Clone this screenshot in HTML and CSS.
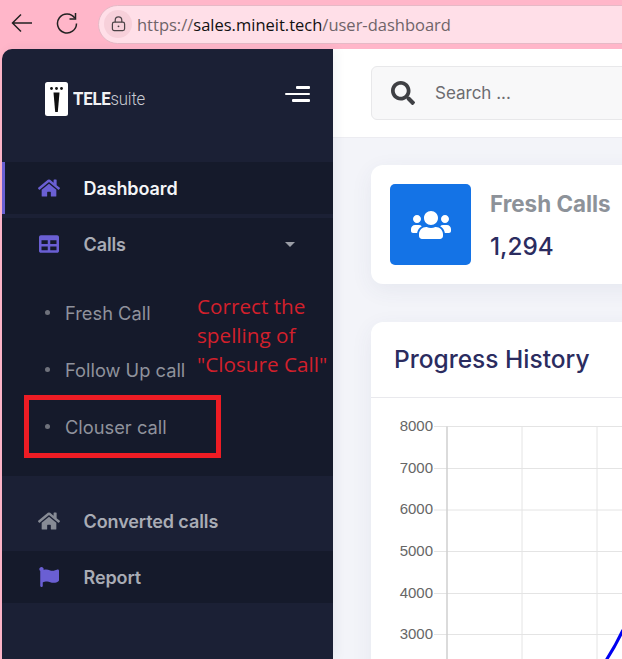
FILE: index.html
```html
<!DOCTYPE html>
<html lang="en">
<head>
  <meta charset="UTF-8" />
  <meta name="viewport" content="width=device-width, initial-scale=1.0"/>
  <title>TELEsuite Dashboard</title>
  <link rel="stylesheet" href="styles.css">
</head>
<body>

  <!-- Browser bar -->
  <div class="browser-bar">
    <svg class="back-icon" viewBox="0 0 22 22"><path d="M21 11H1.500M10 2.500L1.500 11l8.500 8.500"/></svg>
    <svg class="reload-icon" viewBox="0 0 22 22"><path d="M18.800 6A9.500 9.500 0 1 0 20.500 11.500"/><path d="M19.500 1v6h-6"/></svg>
    <div class="address">
      <span class="lock">
        <svg viewBox="0 0 16 16"><rect x="1.500" y="6" width="13" height="9" rx="2"/><path d="M4.500 6V4a3.500 3.500 0 0 1 7 0v2"/><circle class="lock-dot" cx="8" cy="10.500" r="1"/></svg>
      </span>
      <span class="url">https://<b>sales.mineit.tech</b>/user-dashboard</span>
    </div>
  </div>

  <div class="app">
    <aside class="sidebar">
      <div class="brand">
        <div class="brand-logo">
          <svg class="logo-mark" viewBox="0 0 23 34">
            <rect width="23" height="34" rx="2.500" fill="#fff"/>
            <circle cx="6.500" cy="6.500" r="1.400"/><circle cx="11.500" cy="6.500" r="1.400"/><circle cx="16.500" cy="6.500" r="1.400"/>
            <path d="M8.500 10.500h6L12.800 30h-2.600z"/>
          </svg>
          <span class="logo-text"><b>TELE</b>suite</span>
        </div>
        <div class="menu-toggle"><span class="bar-top"></span><span class="bar-mid"></span><span class="bar-bottom"></span></div>
      </div>

      <nav>
        <a class="nav-item active">
          <svg class="nav-icon purple" viewBox="0 0 576 512"><path d="M280.37 148.26L96 300.11V464a16 16 0 0 0 16 16l112.06-.29a16 16 0 0 0 15.92-16V368a16 16 0 0 1 16-16h64a16 16 0 0 1 16 16v95.64a16 16 0 0 0 16 16.05L464 480a16 16 0 0 0 16-16V300L295.67 148.26a12.19 12.19 0 0 0-15.3 0zM571.6 251.47L488 182.56V44.05a12 12 0 0 0-12-12h-56a12 12 0 0 0-12 12v72.61L318.47 43a48 48 0 0 0-61 0L4.34 251.47a12 12 0 0 0-1.6 16.9l25.5 31A12 12 0 0 0 45.15 301l235.22-193.74a12.19 12.19 0 0 1 15.3 0L530.9 301a12 12 0 0 0 16.9-1.6l25.5-31a12 12 0 0 0-1.7-16.93z"/></svg>
          Dashboard
        </a>

        <div class="nav-group">
          <a class="nav-item">
            <svg class="nav-icon purple" viewBox="0 0 512 512"><path d="M464 32H48C21.49 32 0 53.49 0 80v352c0 26.51 21.49 48 48 48h416c26.51 0 48-21.49 48-48V80c0-26.51-21.49-48-48-48zM224 416H64v-96h160v96zm0-160H64v-96h160v96zm224 160H288v-96h160v96zm0-160H288v-96h160v96z"/></svg>
            Calls
            <span class="caret"></span>
          </a>
          <ul class="sub-menu">
            <li>Fresh Call</li>
            <li>Follow Up call</li>
            <li>Clouser call</li>
          </ul>
        </div>

        <a class="nav-item converted">
          <svg class="nav-icon grey" viewBox="0 0 576 512"><path d="M280.37 148.26L96 300.11V464a16 16 0 0 0 16 16l112.06-.29a16 16 0 0 0 15.92-16V368a16 16 0 0 1 16-16h64a16 16 0 0 1 16 16v95.64a16 16 0 0 0 16 16.05L464 480a16 16 0 0 0 16-16V300L295.67 148.26a12.19 12.19 0 0 0-15.3 0zM571.6 251.47L488 182.56V44.05a12 12 0 0 0-12-12h-56a12 12 0 0 0-12 12v72.61L318.47 43a48 48 0 0 0-61 0L4.34 251.47a12 12 0 0 0-1.6 16.9l25.5 31A12 12 0 0 0 45.15 301l235.22-193.74a12.19 12.19 0 0 1 15.3 0L530.9 301a12 12 0 0 0 16.9-1.6l25.5-31a12 12 0 0 0-1.7-16.93z"/></svg>
          Converted calls
        </a>
        <a class="nav-item report">
          <svg class="nav-icon purple" viewBox="0 0 512 512"><path d="M349.565 98.783C295.978 98.783 251.721 64 184.348 64c-24.955 0-47.309 4.384-68.045 12.013a55.947 55.947 0 0 0 3.586-23.562C118.117 24.015 94.806 1.206 66.338.048 34.345-1.254 8 24.296 8 56c0 19.026 9.497 35.825 24 45.945V488c0 13.255 10.745 24 24 24h16c13.255 0 24-10.745 24-24v-94.4c28.311-12.064 63.582-22.122 114.435-22.122 53.588 0 97.844 34.783 165.217 34.783 48.169 0 86.667-16.294 122.505-40.858C506.84 359.452 512 349.571 512 339.045v-243.1c0-23.393-24.269-38.87-45.485-29.016-34.338 15.948-76.454 31.854-116.95 31.854z"/></svg>
          Report
        </a>
      </nav>

      <!-- Review annotation drawn over the screenshot -->
      <div class="note">Correct the<br>spelling of<br>"Closure Call"</div>
      <div class="note-box"></div>
    </aside>

    <main class="main">
      <div class="topbar">
        <div class="search">
          <svg class="search-icon" viewBox="0 0 512 512"><path d="M505 442.7L405.3 343c-4.500-4.500-10.600-7-17-7H372c27.600-35.300 44-79.700 44-128C416 93.100 322.900 0 208 0S0 93.100 0 208s93.100 208 208 208c48.300 0 92.700-16.400 128-44v16.300c0 6.400 2.500 12.500 7 17l99.700 99.700c9.400 9.400 24.600 9.400 33.900 0l28.300-28.300c9.400-9.400 9.400-24.600.1-34zM208 336c-70.700 0-128-57.200-128-128 0-70.700 57.200-128 128-128 70.700 0 128 57.200 128 128 0 70.700-57.200 128-128 128z"/></svg>
          <span class="search-text">Search ...</span>
        </div>
      </div>

      <div class="content">
        <div class="card stat-card">
          <div class="stat-icon">
            <svg viewBox="0 0 640 512"><path d="M96 224c35.300 0 64-28.700 64-64s-28.700-64-64-64-64 28.700-64 64 28.700 64 64 64zm448 0c35.300 0 64-28.700 64-64s-28.700-64-64-64-64 28.700-64 64 28.700 64 64 64zm32 32h-64c-17.600 0-33.500 7.100-45.100 18.600 40.300 22.100 68.900 62 75.100 109.400h66c17.700 0 32-14.300 32-32v-32c0-35.300-28.700-64-64-64zm-256 0c61.900 0 112-50.100 112-112S381.900 32 320 32 208 82.100 208 144s50.100 112 112 112zm76.800 32h-8.300c-20.800 10-43.900 16-68.500 16s-47.600-6-68.500-16h-8.300C179.600 288 128 339.600 128 403.200V432c0 26.500 21.500 48 48 48h288c26.500 0 48-21.500 48-48v-28.800c0-63.600-51.600-115.200-115.200-115.200zm-223.700-13.400C161.500 263.100 145.600 256 128 256H64c-35.300 0-64 28.700-64 64v32c0 17.700 14.300 32 32 32h65.900c6.300-47.400 34.900-87.300 75.200-109.400z"/></svg>
          </div>
          <div class="stat-body">
            <div class="stat-label">Fresh Calls</div>
            <div class="stat-value">1,294</div>
          </div>
        </div>

        <div class="card chart-card">
          <h2 class="chart-title">Progress History</h2>
          <svg class="chart" viewBox="0 0 400 300" width="400" height="300">
            <g class="grid">
              <path d="M63 28.500H400M63 70.500H400M63 112H400M63 153.500H400M63 195.500H400M63 236.500H400"/>
              <path d="M151 28.500V300M226 28.500V300"/>
            </g>
            <path class="axis" d="M76 28.500V300"/>
            <g class="ticks">
              <text x="62" y="33">8000</text>
              <text x="62" y="75">7000</text>
              <text x="62" y="116">6000</text>
              <text x="62" y="158">5000</text>
              <text x="62" y="200">4000</text>
              <text x="62" y="241">3000</text>
            </g>
            <path class="series" d="M234 264Q244 249 252 232"/>
          </svg>
        </div>
      </div>
    </main>
  </div>

</body>
</html>
```

FILE: styles.css
```css
* {
  box-sizing: border-box;
  margin: 0;
  padding: 0;
}
body {
  font-family: Inter, "Open Sans", sans-serif;
  background: #ffb6c9;
  height: 100vh;
  overflow: hidden;
  display: flex;
  flex-direction: column;
}

/* browser bar */
.browser-bar {
  height: 49px;
  flex: none;
  display: flex;
  align-items: center;
  padding-left: 11px;
  overflow: hidden;
}
.back-icon, .reload-icon {
  flex: none;
  fill: none;
  stroke: #222;
  stroke-width: 1.5;
  width: 22px;
  height: 22px;
  margin-top: -3px;
}
.reload-icon {
  margin-left: 23px;
}
.address {
  margin-left: 20px;
  flex: none;
  width: 560px;
  height: 39px;
  display: flex;
  align-items: center;
  padding-left: 5px;
  background: #ffdfe8;
  border: 1px solid #e6b9c6;
  border-radius: 20px 0 0 20px;
  margin-top: -1px;
}
.lock {
  width: 28px;
  height: 28px;
  border-radius: 50%;
  background: #f7d0da;
  display: flex;
  align-items: center;
  justify-content: center;
}
.lock svg {
  width: 15px;
  height: 16px;
  fill: none;
  stroke: #4c4347;
  stroke-width: 1.3;
}
.lock .lock-dot {
  fill: #4c4347;
  stroke: none;
}
.url {
  margin-left: 5px;
  font-family: "Open Sans", sans-serif;
  font-size: 16.500px;
  color: #6f6469;
  white-space: nowrap;
}
.url b {
  font-weight: 400;
  color: #111;
}

.app {
  flex: 1;
  min-height: 0;
  display: flex;
  padding-left: 2px;
}

/* sidebar */
.sidebar {
  position: relative;
  z-index: 2;
  width: 331px;
  flex: none;
  background: #1b2035;
  border-top-left-radius: 10px;
  box-shadow: 3px 0 12px rgba(40, 50, 90, 0.06);
}
.brand {
  height: 113px;
  display: flex;
  align-items: center;
  justify-content: space-between;
  padding: 0 23px 14px 43px;
}
.brand-logo {
  display: flex;
  align-items: center;
  gap: 5px;
}
.logo-mark {
  width: 23px;
  height: 34px;
  fill: #111;
}
.logo-text {
  font-family: Roboto, sans-serif;
  font-size: 19px;
  font-weight: 300;
  color: #c9cbd2;
  letter-spacing: -0.2px;
  transform: scaleX(0.88);
  transform-origin: left;
}
.logo-text b {
  font-weight: 700;
  color: #f2f2f4;
}
.menu-toggle {
  display: flex;
  flex-direction: column;
  align-items: flex-end;
  gap: 4px;
  margin-bottom: 9px;
}
.menu-toggle span {
  display: block;
  height: 3px;
  background: #fff;
  border-radius: 1px;
}
.bar-top {
  width: 14px;
}
.menu-toggle .bar-mid {
  width: 25px;
  height: 2px;
}
.bar-bottom {
  width: 18px;
}

.nav-item {
  display: flex;
  align-items: center;
  height: 52px;
  padding-left: 36px;
  font-size: 18px;
  font-weight: 600;
  color: #a9acb5;
  letter-spacing: -0.1px;
}
.nav-item.active {
  background: #151a2b;
  color: #f4f5f7;
  border-left: 3px solid #6a5fd3;
  padding-left: 33px;
  margin-bottom: 4px;
}
.nav-icon {
  width: 22px;
  height: 20px;
  margin-right: 23.500px;
  flex: none;
}
.purple {
  fill: #6a5fd3;
}
.grey {
  fill: #878b95;
}
.nav-group {
  background: #151a2b;
  height: 258px;
}
.caret {
  margin-left: auto;
  margin-right: 38px;
  width: 0;
  height: 0;
  border-left: 5px solid transparent;
  border-right: 5px solid transparent;
  border-top: 5px solid #9a9da6;
}
.sub-menu {
  list-style: none;
  padding-top: 14px;
}
.sub-menu li {
  display: flex;
  align-items: center;
  height: 57px;
  padding-left: 43px;
  font-size: 18.300px;
  color: #8f929c;
}
.sub-menu li::before {
  content: "";
  width: 5px;
  height: 5px;
  border-radius: 50%;
  background: #6f727c;
  margin-right: 15px;
}
.nav-item.converted {
  height: 75px;
  padding-top: 15px;
}
.nav-item.report {
  background: #151a2b;
}
.note {
  position: absolute;
  left: 195px;
  top: 243px;
  font-family: "Open Sans", sans-serif;
  font-size: 20.700px;
  line-height: 29px;
  color: #d2202c;
  white-space: nowrap;
}
.note-box {
  position: absolute;
  left: 22px;
  top: 346px;
  width: 197px;
  height: 63px;
  border: 5px solid #ed1c24;
}

/* main area */
.main {
  flex: none;
  width: 289px;
  background: #f3f4f9;
  overflow: hidden;
}
.topbar {
  height: 89px;
  background: #fff;
  border-bottom: 1px solid #ececf1;
  padding: 17px 0 0 38px;
}
.search {
  width: 400px;
  height: 54px;
  display: flex;
  align-items: center;
  gap: 20px;
  padding-left: 19px;
  background: #f8f8f9;
  border: 1px solid #e8e8ea;
  border-radius: 6px;
}
.search-icon {
  width: 24px;
  height: 24px;
  fill: #3f4044;
}
.search-text {
  font-size: 17px;
  color: #6c6c70;
}
.content {
  padding: 27px 0 0 38px;
  width: 460px;
}
.card {
  background: #fff;
  border-radius: 12px;
  box-shadow: 0 6px 22px rgba(60, 70, 120, 0.07);
}
.stat-card {
  height: 119px;
  display: flex;
  align-items: center;
  gap: 19px;
  padding-left: 19px;
  margin-bottom: 38px;
}
.stat-icon {
  width: 81px;
  height: 81px;
  background: #1473e6;
  border-radius: 5px;
  display: flex;
  align-items: center;
  justify-content: center;
}
.stat-icon svg {
  width: 40px;
  height: 32px;
  fill: #fff;
}
.stat-body {
  padding-top: 1px;
}
.stat-label {
  font-size: 22.400px;
  font-weight: 700;
  color: #8d9299;
  margin-bottom: 14px;
}
.stat-value {
  font-size: 24.300px;
  font-weight: 500;
  color: #2b2c5f;
}
.chart-title {
  height: 76px;
  display: flex;
  align-items: center;
  padding: 0 0 2px 23px;
  font-size: 24.500px;
  font-weight: 500;
  color: #2b2c5f;
  border-bottom: 1px solid #e9e9ed;
}
.chart {
  display: block;
}
.grid path {
  stroke: #e4e4e4;
  stroke-width: 1;
  fill: none;
}
.axis {
  stroke: #cfcfcf;
  stroke-width: 1.500;
}
.ticks text {
  font-family: "Liberation Sans", Arial, sans-serif;
  font-size: 15px;
  fill: #666;
  text-anchor: end;
}
.series {
  stroke: #0000f0;
  stroke-width: 3;
  fill: none;
}
```
